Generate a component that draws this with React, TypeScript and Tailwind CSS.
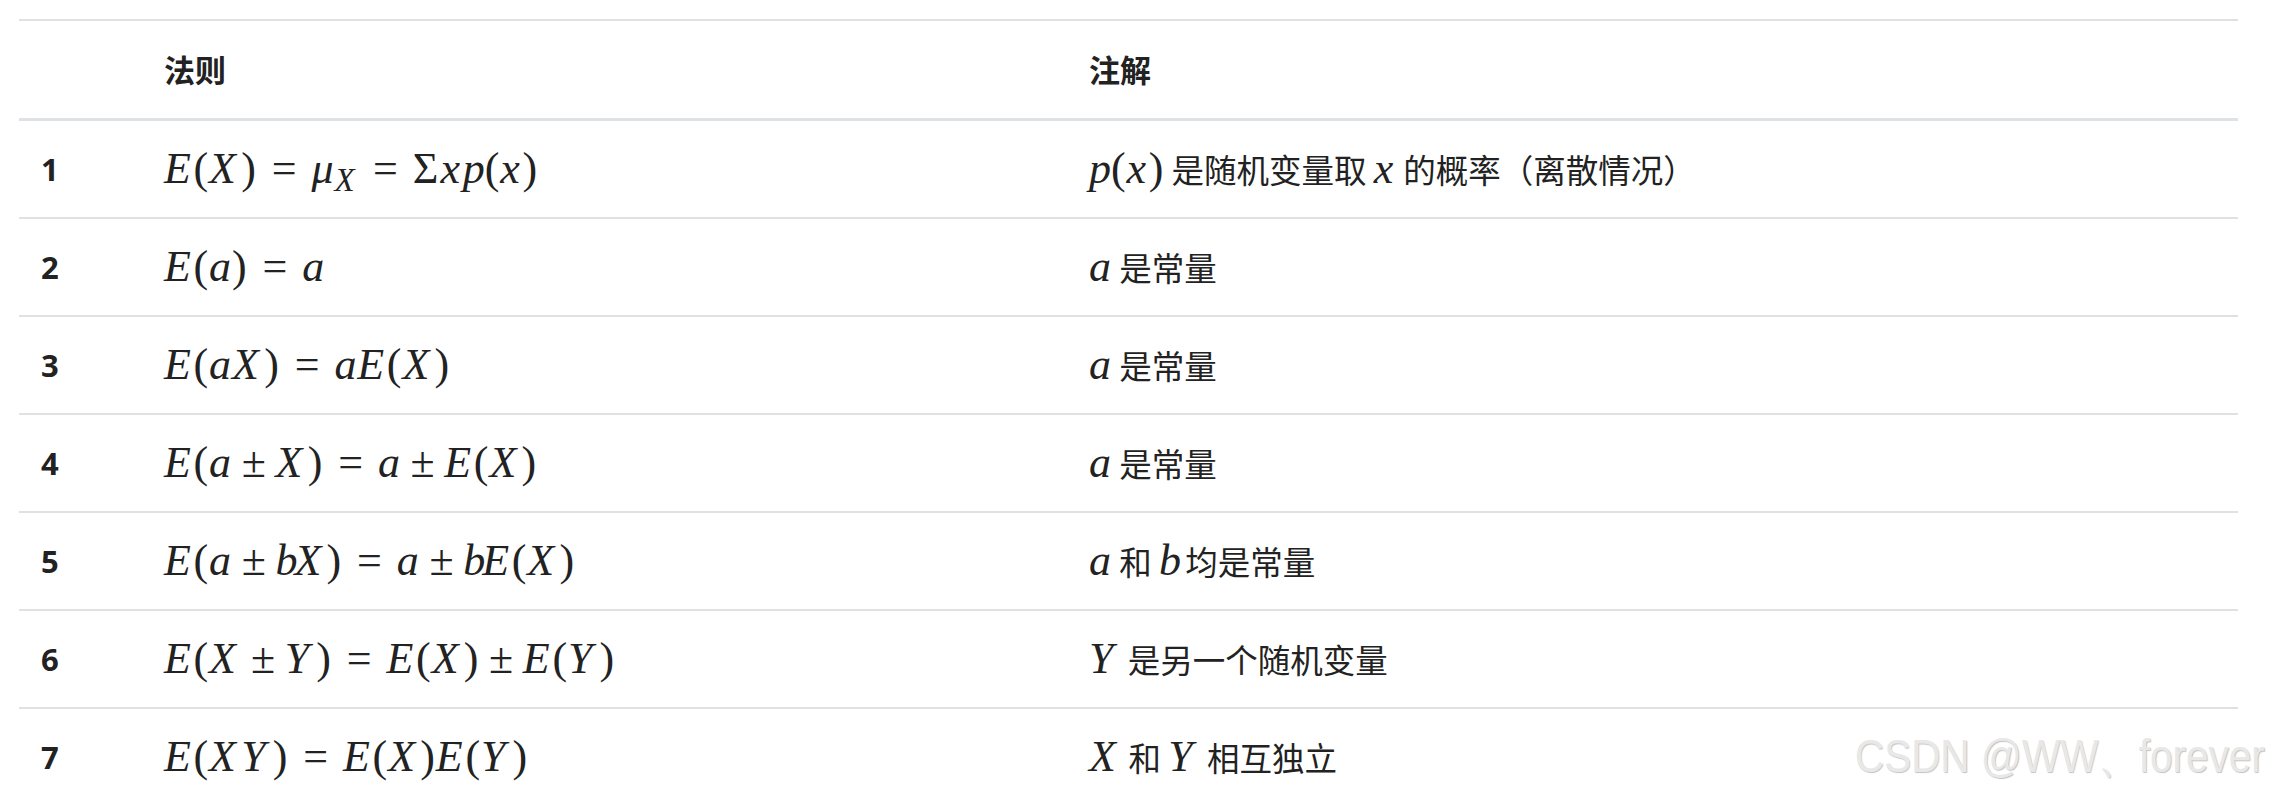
import React from 'react'

const border = 'border-[#dfe2e5]'

// extra advance per glyph so Times-metric italics take the room of TeX's math italics
const track: Record<string, string> = {
  E: 'tracking-[0.06em]',
  X: 'tracking-[0.12em]',
  Y: 'tracking-[0.16em]',
  x: 'tracking-[0.06em]',
  a: 'tracking-[0.02em]',
  b: 'tracking-[-0.07em]',
  p: 'tracking-[0em]',
  μ: 'tracking-[0.02em]',
}

function V({ s }: { s: string }) {
  return (
    <>
      {s.split('').map((c, i) => (
        <i key={i} className={`italic ${track[c] ?? ''}`}>
          {c}
        </i>
      ))}
    </>
  )
}

function P({ c }: { c: string }) {
  return <span className="tracking-[0.02em]">{c}</span>
}

// relation (=) and binary (±) operators, spaced like TeX
function Rel({ c }: { c: string }) {
  return <span className="mx-[0.34em]">{c}</span>
}

function Bin({ c }: { c: string }) {
  return <span className="mx-[0.22em]">{c}</span>
}

function M({ children }: { children: React.ReactNode }) {
  return <span className="font-['Liberation_Serif',serif] text-[44px]">{children}</span>
}

function T({ children }: { children: React.ReactNode }) {
  return <span className="font-['Noto_Sans_CJK_SC',sans-serif] text-[32.5px]">{children}</span>
}

const E = (v: React.ReactNode) => (
  <>
    <V s="E" />
    <P c="(" />
    {v}
    <P c=")" />
  </>
)

const rows: { n: string; law: React.ReactNode; note: React.ReactNode }[] = [
  {
    n: '1',
    law: (
      <M>
        {E(<V s="X" />)}
        <Rel c="=" />
        <V s="μ" />
        <sub className="italic tracking-[0.1em]">X</sub>
        <Rel c="=" />
        <span className="tracking-[0.05em]">Σ</span>
        <V s="xp" />
        <P c="(" />
        <V s="x" />
        <P c=")" />
      </M>
    ),
    note: (
      <>
        <M>
          <V s="p" />
          <P c="(" />
          <V s="x" />
          <P c=")" />
        </M>{' '}
        <T>是随机变量取</T>{' '}
        <M>
          <V s="x" />
        </M>{' '}
        <T>的概率（离散情况）</T>
      </>
    ),
  },
  {
    n: '2',
    law: (
      <M>
        {E(<V s="a" />)}
        <Rel c="=" />
        <V s="a" />
      </M>
    ),
    note: (
      <>
        <M>
          <V s="a" />
        </M>{' '}
        <T>是常量</T>
      </>
    ),
  },
  {
    n: '3',
    law: (
      <M>
        {E(<V s="aX" />)}
        <Rel c="=" />
        <V s="a" />
        {E(<V s="X" />)}
      </M>
    ),
    note: (
      <>
        <M>
          <V s="a" />
        </M>{' '}
        <T>是常量</T>
      </>
    ),
  },
  {
    n: '4',
    law: (
      <M>
        {E(
          <>
            <V s="a" />
            <Bin c="±" />
            <V s="X" />
          </>,
        )}
        <Rel c="=" />
        <V s="a" />
        <Bin c="±" />
        {E(<V s="X" />)}
      </M>
    ),
    note: (
      <>
        <M>
          <V s="a" />
        </M>{' '}
        <T>是常量</T>
      </>
    ),
  },
  {
    n: '5',
    law: (
      <M>
        {E(
          <>
            <V s="a" />
            <Bin c="±" />
            <V s="bX" />
          </>,
        )}
        <Rel c="=" />
        <V s="a" />
        <Bin c="±" />
        <V s="b" />
        {E(<V s="X" />)}
      </M>
    ),
    note: (
      <>
        <M>
          <V s="a" />
        </M>{' '}
        <T>和</T>{' '}
        <M>
          <V s="b" />
        </M>{' '}
        <T>均是常量</T>
      </>
    ),
  },
  {
    n: '6',
    law: (
      <M>
        {E(
          <>
            <V s="X" />
            <Bin c="±" />
            <V s="Y" />
          </>,
        )}
        <Rel c="=" />
        {E(<V s="X" />)}
        <Bin c="±" />
        {E(<V s="Y" />)}
      </M>
    ),
    note: (
      <>
        <M>
          <V s="Y" />
        </M>{' '}
        <T>是另一个随机变量</T>
      </>
    ),
  },
  {
    n: '7',
    law: (
      <M>
        {E(<V s="XY" />)}
        <Rel c="=" />
        {E(<V s="X" />)}
        {E(<V s="Y" />)}
      </M>
    ),
    note: (
      <>
        <M>
          <V s="X" />
        </M>{' '}
        <T>和</T>{' '}
        <M>
          <V s="Y" />
        </M>{' '}
        <T>相互独立</T>
      </>
    ),
  },
]

export default function App() {
  return (
    <div className="relative w-[2271px] h-[795px] overflow-hidden bg-white pt-[19px] pl-[19px] text-[#222]">
      <div className="w-[2219px]">
        <div className={`grid grid-cols-[123px_925px_1fr] items-center h-[102px] border-t-2 border-b-[3px] ${border}`}>
          <div />
          <div className="pl-[22px] font-['Noto_Sans_CJK_SC',sans-serif] text-[31px] font-bold">法则</div>
          <div className="pl-[22px] font-['Noto_Sans_CJK_SC',sans-serif] text-[31px] font-bold">注解</div>
        </div>

        {rows.map((row) => (
          <div
            key={row.n}
            className={`grid grid-cols-[123px_925px_1fr] items-center h-[98px] border-b-2 ${border}`}
          >
            <div className="pl-[22px] font-['Open_Sans',sans-serif] text-[31px] font-bold">{row.n}</div>
            <div className="pl-[22px] whitespace-nowrap leading-none">{row.law}</div>
            <div className="pl-[22px] whitespace-nowrap leading-none font-['Noto_Sans_CJK_SC',sans-serif] text-[32.5px]">
              {row.note}
            </div>
          </div>
        ))}
      </div>

      <div className="absolute right-[6px] top-[733px] origin-right scale-x-[0.88] font-['Liberation_Sans',sans-serif] text-[46px] leading-none text-[#e8e8e8] [text-shadow:1px_1px_1px_#c4c4c4] whitespace-nowrap">
        CSDN @WW、forever
      </div>
    </div>
  )
}
